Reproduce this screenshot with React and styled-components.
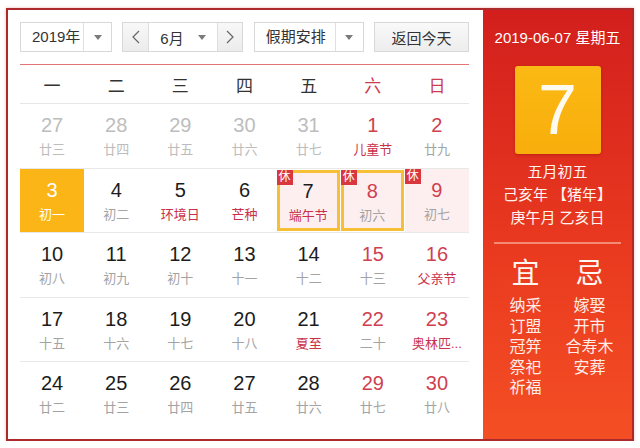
import React from "react";
import styled, { createGlobalStyle } from "styled-components";

const GlobalStyle = createGlobalStyle`
  html, body { margin: 0; padding: 0; background: #fff; }
  body { font-family: "Liberation Sans", "Noto Sans CJK SC", sans-serif; }
  * { box-sizing: border-box; }
`;

const Page = styled.div`
  padding: 8px 0 0 6px;
`;

const Frame = styled.div`
  display: flex;
  width: 628px;
  height: 433px;
  border: 2px solid #ad2a2c;
  box-shadow: 0 0 3px rgba(200, 60, 60, 0.35);
  background: #fff;
`;

const Left = styled.div`
  width: 475px;
  padding: 12px 14px 0 12px;
  display: flex;
  flex-direction: column;
`;

const Toolbar = styled.div`
  display: flex;
  justify-content: space-between;
  height: 30px;
  margin-bottom: 12px;
`;

const Select = styled.div`
  display: flex;
  width: ${(p) => p.$w}px;
  height: 30px;
  border: 1px solid #d8d8d8;
  background: #fff;
  color: #333;
  font-size: 15px;
`;

const SelectText = styled.div`
  flex: 1;
  display: flex;
  align-items: center;
  padding-left: 11px;
  line-height: 28px;
`;

const CaretBox = styled.div`
  width: ${(p) => p.$w || 28}px;
  display: flex;
  align-items: center;
  justify-content: center;
  border-left: ${(p) => (p.$plain ? "none" : "1px solid #e0e0e0")};
`;

const Caret = styled.span`
  width: 0;
  height: 0;
  border-left: 4px solid transparent;
  border-right: 4px solid transparent;
  border-top: 5px solid #7a7a7a;
`;

const Group = styled.div`
  display: flex;
  width: 121px;
  height: 30px;
  border: 1px solid #d8d8d8;
  font-size: 15px;
  color: #333;
`;

const ArrowBtn = styled.div`
  width: ${(p) => p.$w}px;
  display: flex;
  align-items: center;
  justify-content: center;
  background: linear-gradient(#f8f8f8, #ececec);
  border-${(p) => p.$side}: 1px solid #dcdcdc;
`;

const MonthSel = styled.div`
  flex: 1;
  display: flex;
  align-items: center;
  justify-content: space-between;
  padding: 0 11px 0 11px;
  background: #fff;
`;

const TodayBtn = styled.div`
  width: 95px;
  height: 30px;
  border: 1px solid #d8d8d8;
  background: linear-gradient(#f9f9f9, #ededed);
  color: #333;
  font-size: 15px;
  display: flex;
  align-items: center;
  justify-content: center;
`;

const WeekHead = styled.div`
  display: grid;
  grid-template-columns: repeat(7, 1fr);
  height: 40px;
  border-top: 1px solid #e57373;
  border-bottom: 1px solid #e6e6e6;
`;

const HeadCell = styled.div`
  display: flex;
  align-items: center;
  justify-content: center;
  font-size: 17px;
  color: ${(p) => (p.$weekend ? "#cc3d50" : "#333")};
`;

const Week = styled.div`
  display: grid;
  grid-template-columns: repeat(7, 1fr);
  height: 64.5px;
  border-bottom: ${(p) => (p.$last ? "none" : "1px solid #e8e8e8")};
`;

const Cell = styled.div`
  position: relative;
  display: flex;
  flex-direction: column;
  align-items: center;
  padding-top: 9px;
  background: ${(p) => (p.$sel ? "#fbb517" : p.$rest ? "#fdeff0" : "transparent")};
  box-shadow: ${(p) => (p.$frame ? "inset 0 0 0 3px #f6bf35" : "none")};
  margin: ${(p) => (p.$frame ? "1px 1px 1px 0" : "0")};
`;

const Num = styled.div`
  font-size: 20px;
  line-height: 24px;
  color: ${(p) => p.$c};
`;

const Lunar = styled.div`
  margin-top: 4px;
  font-size: 13px;
  line-height: 18px;
  color: ${(p) => p.$c};
  white-space: nowrap;
`;

const RestBadge = styled.span`
  position: absolute;
  top: 0;
  left: 0;
  width: 16px;
  height: 15px;
  background: #d8373f;
  color: #fff;
  font-size: 12px;
  line-height: 15px;
  text-align: center;
`;

const Right = styled.div`
  width: 149px;
  background: linear-gradient(#d21f1d, #e9391f 55%, #f44f24);
  color: #fff;
  display: flex;
  flex-direction: column;
  align-items: center;
  padding-top: 18px;
`;

const DateLine = styled.div`
  font-size: 15px;
  line-height: 20px;
  white-space: nowrap;
`;

const DayBox = styled.div`
  margin-top: 18px;
  width: 86px;
  height: 88px;
  border-radius: 3px;
  background: linear-gradient(#fbb914, #f8ae0c);
  box-shadow: 0 1px 3px rgba(120, 0, 0, 0.35);
  display: flex;
  align-items: center;
  justify-content: center;
  font-size: 70px;
  color: #fffaf0;
  line-height: 1;
`;

const LunarInfo = styled.div`
  margin-top: 6px;
  text-align: center;
  font-size: 15px;
  line-height: 23px;
  color: #fff3ef;
`;

const Divider = styled.div`
  margin-top: 13px;
  width: 127px;
  height: 2px;
  background: #f28a74;
`;

const YiJi = styled.div`
  margin-top: 14px;
  display: grid;
  grid-template-columns: 64px 64px;
`;

const YiCol = styled.div`
  display: flex;
  flex-direction: column;
  align-items: center;
`;

const Big = styled.div`
  font-size: 28px;
  line-height: 32px;
  margin-bottom: 6px;
  color: #fff6f2;
`;

const Item = styled.div`
  font-size: 16px;
  line-height: 20.5px;
  color: #ffece6;
  white-space: nowrap;
`;

const Chevron = ({ dir }) => (
  <svg width="8" height="14" viewBox="0 0 8 14">
    <polyline
      points={dir === "l" ? "7,1 1,7 7,13" : "1,1 7,7 1,13"}
      fill="none"
      stroke="#666"
      strokeWidth="1.2"
    />
  </svg>
);

const RED_NUM = "#cf3f50";
const RED_TXT = "#c9304a";
const BLACK = "#1c1c1c";
const GRAY_NUM = "#bdbdbd";
const GRAY_TXT = "#a3a3a3";
const GRAY_OLD = "#bcbcbc";

const weeks = [
  [
    { d: 27, l: "廿三", o: 1 },
    { d: 28, l: "廿四", o: 1 },
    { d: 29, l: "廿五", o: 1 },
    { d: 30, l: "廿六", o: 1 },
    { d: 31, l: "廿七", o: 1 },
    { d: 1, l: "儿童节", w: 1, f: 1 },
    { d: 2, l: "廿九", w: 1 },
  ],
  [
    { d: 3, l: "初一", sel: 1 },
    { d: 4, l: "初二" },
    { d: 5, l: "环境日", f: 1 },
    { d: 6, l: "芒种", f: 1 },
    { d: 7, l: "端午节", f: 1, rest: 1, frame: 1 },
    { d: 8, l: "初六", w: 1, rest: 1, frame: 1 },
    { d: 9, l: "初七", w: 1, rest: 1 },
  ],
  [
    { d: 10, l: "初八" },
    { d: 11, l: "初九" },
    { d: 12, l: "初十" },
    { d: 13, l: "十一" },
    { d: 14, l: "十二" },
    { d: 15, l: "十三", w: 1 },
    { d: 16, l: "父亲节", w: 1, f: 1 },
  ],
  [
    { d: 17, l: "十五" },
    { d: 18, l: "十六" },
    { d: 19, l: "十七" },
    { d: 20, l: "十八" },
    { d: 21, l: "夏至", f: 1 },
    { d: 22, l: "二十", w: 1 },
    { d: 23, l: "奥林匹...", w: 1, f: 1 },
  ],
  [
    { d: 24, l: "廿二" },
    { d: 25, l: "廿三" },
    { d: 26, l: "廿四" },
    { d: 27, l: "廿五" },
    { d: 28, l: "廿六" },
    { d: 29, l: "廿七", w: 1 },
    { d: 30, l: "廿八", w: 1 },
  ],
];

const heads = ["一", "二", "三", "四", "五", "六", "日"];

function numColor(c) {
  if (c.sel) return "#fff";
  if (c.o) return GRAY_NUM;
  if (c.w) return RED_NUM;
  return BLACK;
}
function lunarColor(c) {
  if (c.sel) return "#fff";
  if (c.o) return GRAY_OLD;
  if (c.f) return RED_TXT;
  return GRAY_TXT;
}

export default function App() {
  return (
    <>
      <GlobalStyle />
      <Page>
        <Frame>
          <Left>
            <Toolbar>
              <Select $w={92}>
                <SelectText>2019年</SelectText>
                <CaretBox>
                  <Caret />
                </CaretBox>
              </Select>
              <Group>
                <ArrowBtn $w={26} $side="right">
                  <Chevron dir="l" />
                </ArrowBtn>
                <MonthSel>
                  <span>6月</span>
                  <Caret />
                </MonthSel>
                <ArrowBtn $w={25} $side="left">
                  <Chevron dir="r" />
                </ArrowBtn>
              </Group>
              <Select $w={110}>
                <SelectText>假期安排</SelectText>
                <CaretBox>
                  <Caret />
                </CaretBox>
              </Select>
              <TodayBtn>返回今天</TodayBtn>
            </Toolbar>
            <WeekHead>
              {heads.map((h, i) => (
                <HeadCell key={h} $weekend={i >= 5}>
                  {h}
                </HeadCell>
              ))}
            </WeekHead>
            {weeks.map((wk, wi) => (
              <Week key={wi} $last={wi === weeks.length - 1}>
                {wk.map((c, ci) => (
                  <Cell key={ci} $sel={c.sel} $rest={c.rest} $frame={c.frame}>
                    {c.rest ? <RestBadge>休</RestBadge> : null}
                    <Num $c={numColor(c)}>{c.d}</Num>
                    <Lunar $c={lunarColor(c)}>{c.l}</Lunar>
                  </Cell>
                ))}
              </Week>
            ))}
          </Left>
          <Right>
            <DateLine>2019-06-07 星期五</DateLine>
            <DayBox>7</DayBox>
            <LunarInfo>
              <div>五月初五</div>
              <div>己亥年 【猪年】</div>
              <div>庚午月 乙亥日</div>
            </LunarInfo>
            <Divider />
            <YiJi>
              <YiCol>
                <Big>宜</Big>
                <Item>纳采</Item>
                <Item>订盟</Item>
                <Item>冠笄</Item>
                <Item>祭祀</Item>
                <Item>祈福</Item>
              </YiCol>
              <YiCol>
                <Big>忌</Big>
                <Item>嫁娶</Item>
                <Item>开市</Item>
                <Item>合寿木</Item>
                <Item>安葬</Item>
              </YiCol>
            </YiJi>
          </Right>
        </Frame>
      </Page>
    </>
  );
}
